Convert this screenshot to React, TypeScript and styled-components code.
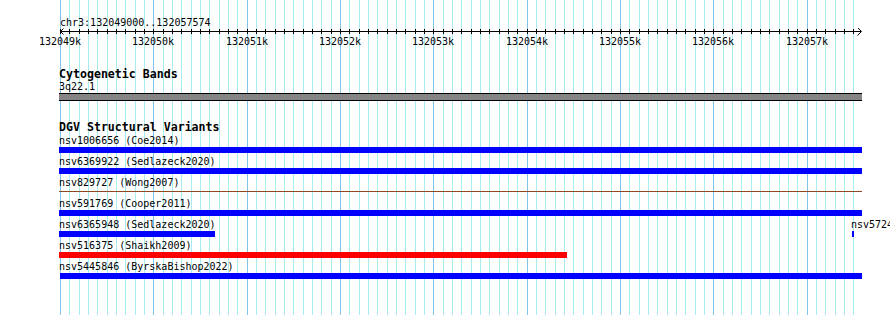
import styled, { createGlobalStyle } from "styled-components"

const START = 132049000
const END = 132057574
const ORIGIN = 60
const SCALE = 0.0933333
const LEFT = 59
const RIGHT = 862

const toX = (bp: number) => ORIGIN + (bp - START) * SCALE

type Feat = {
    id: string
    study: string
    start: number
    end: number
    color: string
    thin?: boolean
}

const lanes: Feat[][] = [
    [{ id: "nsv1006656", study: "Coe2014", start: 132011458, end: 132098230, color: "#0000ff" }],
    [{ id: "nsv6369922", study: "Sedlazeck2020", start: 132046211, end: 132060118, color: "#0000ff" }],
    [{ id: "nsv829727", study: "Wong2007", start: 131993402, end: 132140865, color: "#8b4a22", thin: true }],
    [{ id: "nsv591769", study: "Cooper2011", start: 132028771, end: 132071305, color: "#0000ff" }],
    [
        { id: "nsv6365948", study: "Sedlazeck2020", start: 132048340, end: 132050650, color: "#0000ff" },
        { id: "nsv5724631", study: "Sedlazeck2020", start: 132057486, end: 132057496, color: "#0000ff" },
    ],
    [{ id: "nsv516375", study: "Shaikh2009", start: 132044903, end: 132054421, color: "#ff0000" }],
    [{ id: "nsv5445846", study: "ByrskaBishop2022", start: START, end: 132063917, color: "#0000ff" }],
]

const GlobalStyle = createGlobalStyle`
    body{
        margin:0;
        background:#fff;
        font-family:"DejaVu Sans Mono", "Liberation Mono", monospace;
        color:#000;
    }
`

const Page = styled.div`
    position:relative;
    width:890px;
    height:315px;
    overflow:hidden;
    background:#fff;
`
const Grid = styled.svg`
    position:absolute;
    left:0;
    top:0;
    z-index:0;
`
const Content = styled.div`
    position:relative;
    z-index:1;
    display:flex;
    flex-direction:column;
`
const Segment = styled.p`
    margin:0;
    padding:17px 0 0 ${ORIGIN}px;
    font-size:10px;
    line-height:11px;
`
const Ruler = styled.svg`
    display:block;
    font-family:"DejaVu Sans Mono", monospace;
    font-size:10px;
`
const Track = styled.section<{ $gap: number }>`
    display:flex;
    flex-direction:column;
    align-items:flex-start;
    padding-left:${LEFT}px;
    margin-top:${p => p.$gap}px;
`
const TrackTitle = styled.h3`
    margin:0;
    font-size:11.6px;
    font-weight:bold;
    line-height:13px;
`
const Label = styled.span`
    display:block;
    font-size:10px;
    line-height:11px;
    white-space:nowrap;
`
const Band = styled.div`
    margin-top:1px;
    width:${RIGHT - LEFT}px;
    height:6px;
    background:#858585;
    border-top:1px solid #000;
    border-bottom:1px solid #000;
`
const Lanes = styled.div`
    margin-top:1px;
    align-self:stretch;
    display:flex;
    flex-direction:column;
`
const Lane = styled.div`
    position:relative;
    height:21px;
`
const Feature = styled.div`
    position:absolute;
    top:0;
`
const Bar = styled.div<{ $color: string; $thin?: boolean }>`
    margin-top:${p => (p.$thin ? 3 : 1)}px;
    height:${p => (p.$thin ? 1 : 6)}px;
    background:${p => p.$color};
`

const minor = Array.from({ length: 86 }, (_, i) => ({
    x: Math.round(ORIGIN + i * 100 * SCALE) + 0.5,
    major: i % 10 === 0,
}))
const majors = Array.from({ length: 9 }, (_, k) => ({
    x: Math.round(ORIGIN + k * 1000 * SCALE),
    text: `${START / 1000 + k}k`,
}))

function FeatureGlyph({ f }: { f: Feat }) {
    const x1 = Math.max(LEFT, Math.round(toX(f.start)))
    const x2 = Math.min(RIGHT, Math.round(toX(f.end)) + 1)
    const labelX = Math.max(LEFT, x1 - 1)
    return (
        <Feature style={{ left: labelX - LEFT }}>
            <Label>{f.id} ({f.study})</Label>
            <Bar $color={f.color} $thin={f.thin} style={{ marginLeft: x1 - labelX, width: x2 - x1 }} />
        </Feature>
    )
}

export default function App() {
    return (
        <>
            <GlobalStyle />
            <Page>
                <Grid width={890} height={315} shapeRendering="crispEdges">
                    {minor.map(l => (
                        <line key={l.x} x1={l.x} x2={l.x} y1={0} y2={315} stroke={l.major ? "#80c4ee" : "#a6ecf0"} />
                    ))}
                </Grid>
                <Content>
                    <Segment>chr3:{START}..{END}</Segment>
                    <Ruler width={890} height={19}>
                        <line x1={60} x2={861} y1={3.5} y2={3.5} stroke="#000" shapeRendering="crispEdges" />
                        {minor.map(l => (
                            <line key={l.x} x1={l.x} x2={l.x} y1={1} y2={6} stroke="#000" shapeRendering="crispEdges" />
                        ))}
                        <polyline points="63.5,0.5 60.5,3.5 63.5,6.5" fill="none" stroke="#000" />
                        <polyline points="857.5,-0.5 861.5,3.5 857.5,7.5" fill="none" stroke="#000" />
                        {majors.map(m => (
                            <text key={m.text} x={m.x} y={16.5} textAnchor="middle" fill="#000">{m.text}</text>
                        ))}
                    </Ruler>
                    <Track $gap={21}>
                        <TrackTitle>Cytogenetic Bands</TrackTitle>
                        <Label>3q22.1</Label>
                        <Band />
                    </Track>
                    <Track $gap={20}>
                        <TrackTitle>DGV Structural Variants</TrackTitle>
                        <Lanes>
                            {lanes.map((lane, i) => (
                                <Lane key={i}>
                                    {lane.map(f => <FeatureGlyph key={f.id} f={f} />)}
                                </Lane>
                            ))}
                        </Lanes>
                    </Track>
                </Content>
            </Page>
        </>
    )
}
